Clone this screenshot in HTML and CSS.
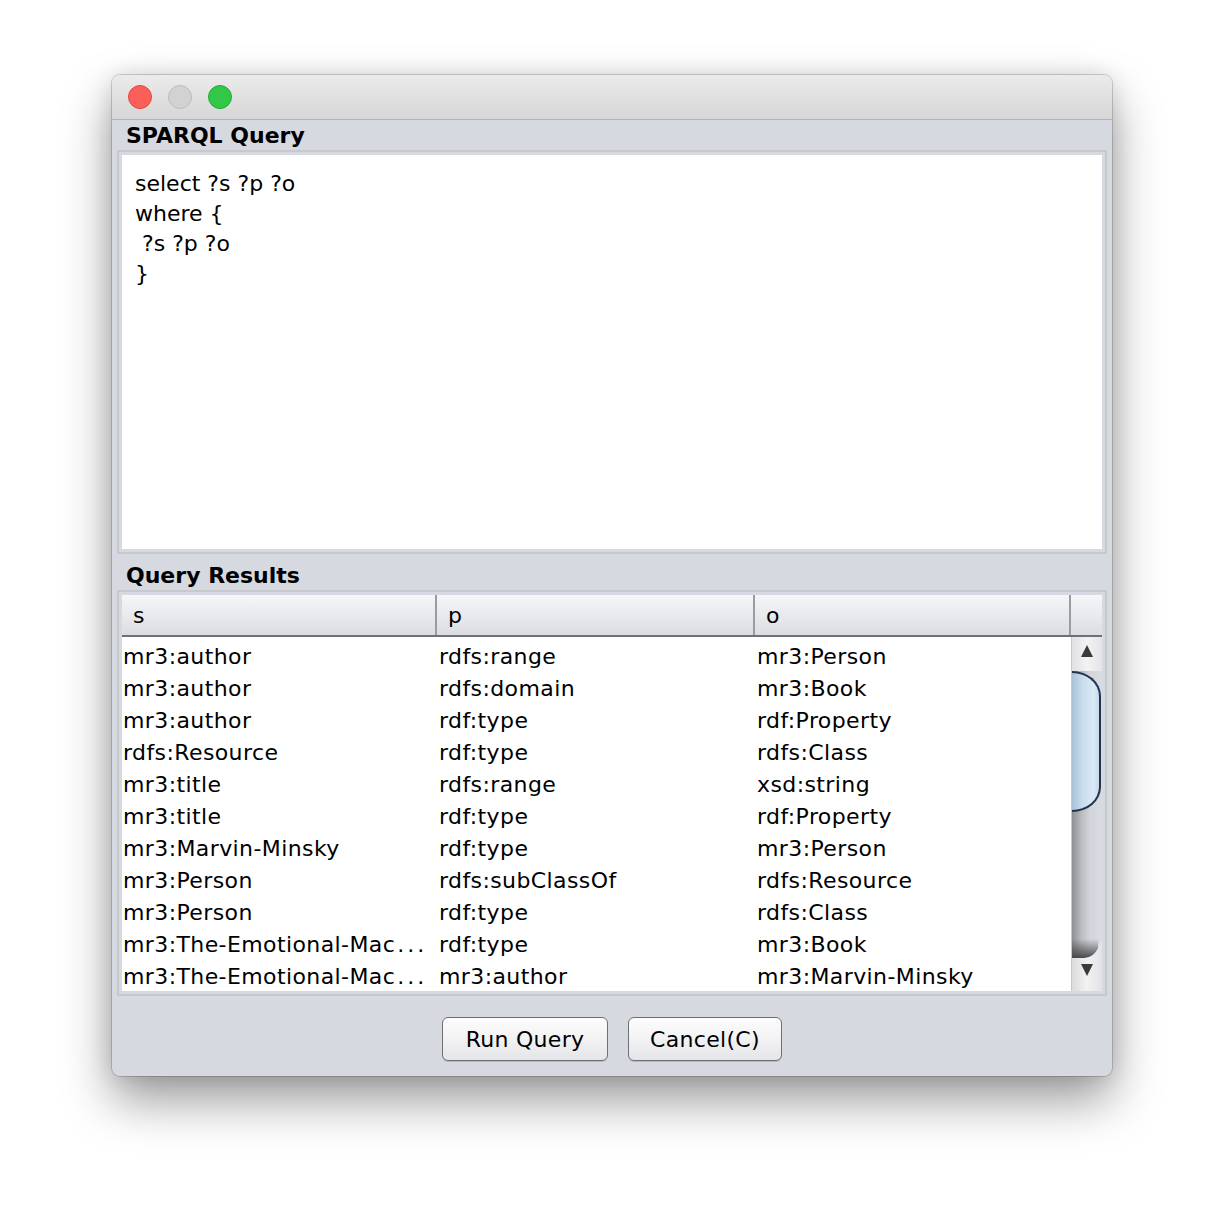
FILE: index.html
```html
<!DOCTYPE html>
<html>
<head>
<meta charset="utf-8">
<link rel="stylesheet" href="styles.css">
</head>
<body>
<div class="window">
  <div class="titlebar">
    <span class="light red"></span>
    <span class="light gray"></span>
    <span class="light green"></span>
  </div>
  <div class="content">
    <div class="section-label">SPARQL Query</div>
    <div class="box query-box">
      <div class="editor">select ?s ?p ?o
where {
 ?s ?p ?o
}</div>
    </div>
    <div class="section-label results-label">Query Results</div>
    <div class="box table-box">
      <div class="thead">
        <div class="th col-s">s</div>
        <div class="th col-p">p</div>
        <div class="th col-o">o</div>
        <div class="th corner"></div>
      </div>
      <div class="tbody">
        <div class="rows">
          <div class="row"><span class="td col-s">mr3:author</span><span class="td col-p">rdfs:range</span><span class="td col-o">mr3:Person</span></div>
          <div class="row"><span class="td col-s">mr3:author</span><span class="td col-p">rdfs:domain</span><span class="td col-o">mr3:Book</span></div>
          <div class="row"><span class="td col-s">mr3:author</span><span class="td col-p">rdf:type</span><span class="td col-o">rdf:Property</span></div>
          <div class="row"><span class="td col-s">rdfs:Resource</span><span class="td col-p">rdf:type</span><span class="td col-o">rdfs:Class</span></div>
          <div class="row"><span class="td col-s">mr3:title</span><span class="td col-p">rdfs:range</span><span class="td col-o">xsd:string</span></div>
          <div class="row"><span class="td col-s">mr3:title</span><span class="td col-p">rdf:type</span><span class="td col-o">rdf:Property</span></div>
          <div class="row"><span class="td col-s">mr3:Marvin-Minsky</span><span class="td col-p">rdf:type</span><span class="td col-o">mr3:Person</span></div>
          <div class="row"><span class="td col-s">mr3:Person</span><span class="td col-p">rdfs:subClassOf</span><span class="td col-o">rdfs:Resource</span></div>
          <div class="row"><span class="td col-s">mr3:Person</span><span class="td col-p">rdf:type</span><span class="td col-o">rdfs:Class</span></div>
          <div class="row"><span class="td col-s">mr3:The-Emotional-Mac<span class="dots">...</span></span><span class="td col-p">rdf:type</span><span class="td col-o">mr3:Book</span></div>
          <div class="row"><span class="td col-s">mr3:The-Emotional-Mac<span class="dots">...</span></span><span class="td col-p">mr3:author</span><span class="td col-o">mr3:Marvin-Minsky</span></div>
        </div>
        <div class="scrollbar">
          <div class="arrow-up"><svg width="14" height="14" viewBox="0 0 14 14"><path d="M7 1 L13 13 L1 13 Z" fill="#3a3a3a"/></svg></div>
          <div class="thumb"></div>
          <div class="track"></div>
          <svg class="bottom-cap" width="30" height="52" viewBox="0 0 30 52">
            <defs>
              <linearGradient id="trk" x1="0" y1="0" x2="1" y2="0">
                <stop offset="0" stop-color="#8e8f93"/>
                <stop offset="0.3" stop-color="#b9babe"/>
                <stop offset="0.6" stop-color="#d3d5da"/>
                <stop offset="1" stop-color="#d8dbe1"/>
              </linearGradient>
              <linearGradient id="shd" x1="0" y1="0" x2="0" y2="1">
                <stop offset="0" stop-color="#3c3c40" stop-opacity="0"/>
                <stop offset="1" stop-color="#3c3c40" stop-opacity="0.95"/>
              </linearGradient>
              <linearGradient id="cap" x1="0" y1="0" x2="1" y2="0">
                <stop offset="0" stop-color="#dcdcde"/>
                <stop offset="0.5" stop-color="#f2f2f3"/>
                <stop offset="1" stop-color="#e2e2e4"/>
              </linearGradient>
            </defs>
            <rect x="0" y="0" width="30" height="52" fill="url(#trk)"/>
            <rect x="0" y="0" width="26" height="20" fill="url(#shd)"/>
            <path d="M0 19 L12 19 Q 24 18 28 4 L30 2 L30 52 L0 52 Z" fill="url(#cap)"/>
            <path d="M9 25 L21 25 L15 37 Z" fill="#3a3a3a"/>
          </svg>
        </div>
      </div>
    </div>
    <div class="buttons">
      <button class="btn run">Run Query</button>
      <button class="btn cancel">Cancel(C)</button>
    </div>
  </div>
</div>
</body>
</html>
```

FILE: styles.css
```css
html, body {
  margin: 0;
  padding: 0;
  background: #ffffff;
}
body {
  min-height: 1224px;
  box-sizing: border-box;
  padding: 75px 0 0 112px;
  font-family: "DejaVu Sans", "Noto Sans", sans-serif;
}
.window {
  width: 1000px;
  height: 1001px;
  border-radius: 8px;
  overflow: hidden;
  box-shadow: 0 0 0 1px rgba(0,0,0,0.16), 0 24px 50px rgba(0,0,0,0.40), 0 0 22px rgba(0,0,0,0.12);
  display: flex;
  flex-direction: column;
  background: #d6d9e0;
}
.titlebar {
  height: 44px;
  flex: none;
  background: linear-gradient(#ebebeb, #d6d6d6);
  border-bottom: 1px solid #b4b4b4;
  display: flex;
  align-items: center;
  gap: 16px;
  padding-left: 16px;
}
.light {
  width: 24px;
  height: 24px;
  border-radius: 50%;
  box-sizing: border-box;
}
.red { background: #fc5f57; border: 1px solid #df4a43; }
.gray { background: #d2d2d2; border: 1px solid #bdbdbd; }
.green { background: #33c748; border: 1px solid #28a83a; }
.content {
  flex: 1;
  padding: 0 5px;
  display: flex;
  flex-direction: column;
}
.section-label {
  font-weight: bold;
  font-size: 22px;
  height: 30px;
  line-height: 31px;
  padding-left: 9px;
  color: #000;
}
.results-label {
  height: 36px;
  line-height: 43px;
}
.box {
  border: 2px solid #c6c8cc;
  padding: 3px;
  background: #d6d9e0;
}
.query-box {
  height: 394px;
}
.editor {
  height: 100%;
  box-sizing: border-box;
  background: #fff;
  white-space: pre;
  font-size: 22px;
  line-height: 30px;
  padding: 14px 12px 12px 13px;
  color: #000;
}
.table-box {
  display: flex;
  flex-direction: column;
}
.thead {
  display: flex;
  height: 42px;
  background: linear-gradient(#f6f6f8, #e9eaee 50%, #dcdde2);
  border-bottom: 2px solid #6e7074;
  box-sizing: border-box;
}
.th {
  font-size: 22px;
  line-height: 41px;
  padding-left: 11px;
  box-sizing: border-box;
  border-right: 2px solid #9a9ca0;
  color: #000;
}
.th.corner { border-right: none; }
.col-s { width: 315px; flex: none; }
.col-p { width: 318px; flex: none; }
.col-o { width: 316px; flex: none; }
.corner { width: 31px; flex: none; }
.tbody {
  display: flex;
  height: 354px;
  background: #fff;
}
.rows {
  width: 949px;
  flex: none;
  overflow: hidden;
  padding-top: 4px;
}
.row {
  display: flex;
  height: 32px;
  line-height: 32px;
  font-size: 22px;
  letter-spacing: 0.4px;
  color: #000;
}
.td {
  padding-left: 2px;
  box-sizing: border-box;
  white-space: nowrap;
  overflow: hidden;
}
.td.col-s { padding-left: 1px; }
.dots {
  letter-spacing: 3px;
  padding-left: 2px;
}
.scrollbar {
  width: 31px;
  flex: none;
  display: flex;
  flex-direction: column;
  border-left: 1px solid #c8c8cc;
  box-sizing: border-box;
  background: linear-gradient(to right, #8e8f93, #b9babe 30%, #d3d5da 60%, #d8dbe1);
}
.arrow-up {
  height: 34px;
  flex: none;
  display: flex;
  justify-content: center;
  padding-top: 7px;
  box-sizing: border-box;
  background: linear-gradient(to right, #e0e0e2, #f3f3f4 50%, #e4e4e6);
}
.thumb {
  height: 141px;
  flex: none;
  margin-right: 1px;
  border: 2px solid #20344e;
  border-left: none;
  border-radius: 0 30px 30px 0 / 0 26px 26px 0;
  background: linear-gradient(to right, #a9c2d8, #c9ddee 40%, #dbe9f5 80%, #c6d9ea);
  box-sizing: border-box;
}
.track {
  flex: 1;
}
.bottom-cap {
  display: block;
  flex: none;
}
.buttons {
  flex: 1;
  display: flex;
  justify-content: center;
  align-items: flex-start;
  gap: 20px;
  padding-top: 21px;
}
.btn {
  height: 44px;
  border: 1.5px solid #6f7073;
  border-radius: 6px;
  background: linear-gradient(#fdfdfd, #f2f2f4 50%, #e4e5e8);
  box-shadow: 0 1px 0 rgba(0,0,0,0.15);
  font-family: "DejaVu Sans", "Noto Sans", sans-serif;
  font-size: 22px;
  letter-spacing: 0.3px;
  color: #000;
  padding: 0;
}
.run { width: 166px; }
.cancel { width: 154px; }
```
